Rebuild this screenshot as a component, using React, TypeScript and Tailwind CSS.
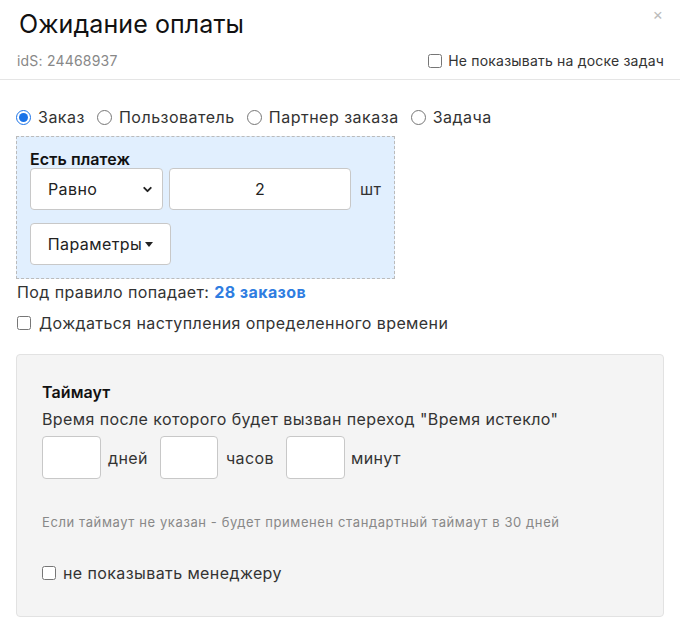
import { ChevronDown } from "lucide-react";

const App = () => {
  return (
    <div
      className="w-[680px] h-[632px] bg-white text-[#222] overflow-hidden"
      style={{ fontFamily: "Inter, 'Noto Sans', sans-serif" }}
    >
      {/* header */}
      <div className="relative border-b border-[#e5e5e5] pl-[17px] pr-[16px] pt-[7px] pb-[8px]">
        <h1 className="text-[25px] leading-[34px] text-[#111] pl-[2px] tracking-[0.1px]">Ожидание оплаты</h1>
        <button className="absolute right-[17px] top-[4px] text-[#bbb] text-[16px] leading-[20px]">×</button>
        <div className="flex items-center justify-between mt-[9px]">
          <span className="text-[14px] text-[#888] tracking-[0.2px]">idS: 24468937</span>
          <label className="flex items-center gap-[6px] text-[14px] text-[#333] tracking-[0.2px]">
            <input type="checkbox" className="w-[14px] h-[14px] m-0" />
            Не показывать на доске задач
          </label>
        </div>
      </div>

      <div className="px-[16px] pt-[27px] tracking-[0.4px]">
        {/* radios */}
        <div className="flex items-center text-[16px] text-[#333] gap-[12px] h-[20px] tracking-[0.5px]">
          {["Заказ", "Пользователь", "Партнер заказа", "Задача"].map((l, i) => (
            <label key={l} className="flex items-center gap-[7px]">
              <input type="radio" name="target" defaultChecked={i === 0} className="w-[15px] h-[15px] m-0 accent-[#1a73e8]" />
              {l}
            </label>
          ))}
        </div>

        {/* rule box */}
        <div className="mt-[9px] w-[379px] bg-[#e1effe] border border-dashed border-[#bbb] pl-[13px] pt-[12px] pb-[13px]">
          <div className="text-[16px] font-semibold leading-[20px] text-[#111] tracking-[0.1px]">Есть платеж</div>
          <div className="flex items-center mt-[-1px] gap-[6px]">
            <div className="w-[133px] h-[42px] bg-white border border-[#c8c8c8] rounded-[4px] flex items-center justify-between pl-[17px] pr-[8px] text-[16px]">
              <span>Равно</span>
              <ChevronDown size={13} strokeWidth={3.5} />
            </div>
            <div className="w-[182px] h-[42px] bg-white border border-[#c8c8c8] rounded-[4px] flex items-center justify-center text-[16px]">2</div>
            <span className="ml-[3px] text-[16px] text-[#333]">шт</span>
          </div>
          <button className="mt-[13px] w-[141px] h-[42px] bg-white border border-[#c8c8c8] rounded-[4px] flex items-center justify-center gap-[3px] text-[16px] text-[#222] tracking-[0.4px]">
            Параметры
            <span className="w-0 h-0 border-l-[4px] border-r-[4px] border-t-[5px] border-l-transparent border-r-transparent border-t-[#222]" />
          </button>
        </div>

        <div className="mt-[1px] text-[16px] text-[#333] pl-[1px]">
          Под правило попадает: <span className="text-[#2f7de1] font-bold">28 заказов</span>
        </div>
        <label className="mt-[7px] flex items-center gap-[8px] text-[16px] text-[#333] pl-[1px]">
          <input type="checkbox" className="w-[14px] h-[14px] m-0" />
          Дождаться наступления определенного времени
        </label>

        {/* timeout box */}
        <div className="mt-[19px] bg-[#f4f4f4] border border-[#e2e2e2] rounded-[4px] pl-[25px] pt-[26px] pb-[31px]">
          <div className="text-[16px] font-semibold text-[#111] leading-[22px] tracking-[0.1px]">Таймаут</div>
          <div className="text-[16px] text-[#333] leading-[22px] mt-[5px]">Время после которого будет вызван переход "Время истекло"</div>
          <div className="flex items-center mt-[6px] text-[16px] text-[#333]">
            <div className="w-[59px] h-[43px] bg-white border border-[#c8c8c8] rounded-[4px]" />
            <span className="ml-[7px] mr-[12px]">дней</span>
            <div className="w-[58px] h-[43px] bg-white border border-[#c8c8c8] rounded-[4px]" />
            <span className="ml-[8px] mr-[12px]">часов</span>
            <div className="w-[59px] h-[43px] bg-white border border-[#c8c8c8] rounded-[4px]" />
            <span className="ml-[6px]">минут</span>
          </div>
          <div className="mt-[34px] text-[13px] text-[#888] tracking-[0.6px]">Если таймаут не указан - будет применен стандартный таймаут в 30 дней</div>
          <label className="mt-[28px] flex items-center gap-[7px] text-[16px] text-[#333]">
            <input type="checkbox" className="w-[14px] h-[14px] m-0" />
            не показывать менеджеру
          </label>
        </div>
      </div>
    </div>
  );
};

export default App;
